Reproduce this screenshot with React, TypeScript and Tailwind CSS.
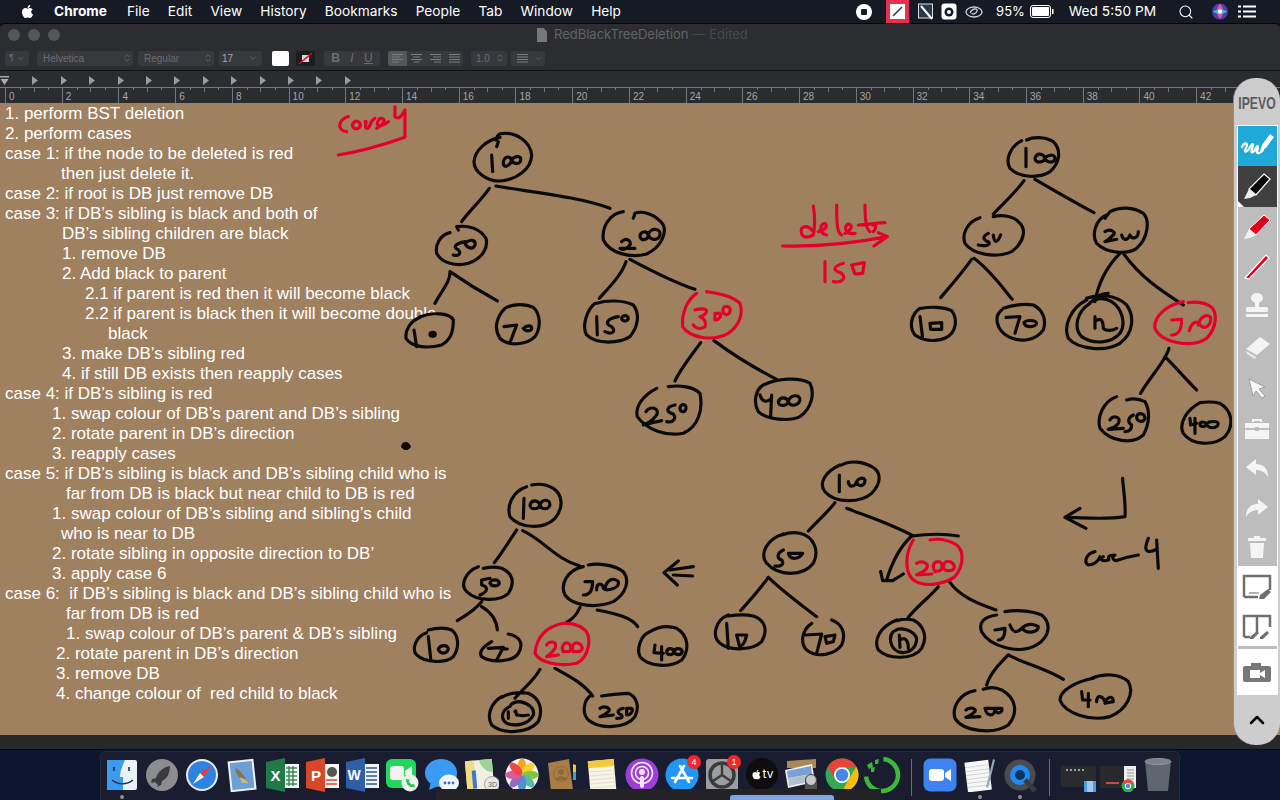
import React from "react";
import { FaApple } from "react-icons/fa";
import { ChevronDown, ChevronsUpDown, ChevronUp, Search } from "lucide-react";

const MENU = ["File", "Edit", "View", "History", "Bookmarks", "People", "Tab", "Window", "Help"];

const LINES: [string, string][] = [
  ["1. perform BST deletion", "pl-0"],
  ["2. perform cases", "pl-0"],
  ["case 1: if the node to be deleted is red", "pl-0"],
  ["then just delete it.", "pl-[56px]"],
  ["case 2: if root is DB just remove DB", "pl-0"],
  ["case 3: if DB’s sibling is black and both of", "pl-0"],
  ["DB’s sibling children are black", "pl-[57px]"],
  ["1. remove DB", "pl-[57px]"],
  ["2. Add black to parent", "pl-[57px]"],
  ["2.1 if parent is red then it will become black", "pl-[80px]"],
  ["2.2 if parent is black then it will become double", "pl-[80px]"],
  ["black", "pl-[103px]"],
  ["3. make DB’s sibling red", "pl-[57px]"],
  ["4. if still DB exists then reapply cases", "pl-[57px]"],
  ["case 4: if DB’s sibling is red", "pl-0"],
  ["1. swap colour of DB’s parent and DB’s sibling", "pl-[47px]"],
  ["2. rotate parent in DB’s direction", "pl-[47px]"],
  ["3. reapply cases", "pl-[47px]"],
  ["case 5: if DB’s sibling is black and DB’s sibling child who is", "pl-0"],
  ["far from DB is black but near child to DB is red", "pl-[61px]"],
  ["1. swap colour of DB’s sibling and sibling’s child", "pl-[47px]"],
  ["who is near to DB", "pl-[56px]"],
  ["2. rotate sibling in opposite direction to DB’", "pl-[47px]"],
  ["3. apply case 6", "pl-[47px]"],
  ["case 6:  if DB’s sibling is black and DB’s sibling child who is", "pl-0"],
  ["far from DB is red", "pl-[61px]"],
  ["1. swap colour of DB’s parent & DB’s sibling", "pl-[61px]"],
  ["2. rotate parent in DB’s direction", "pl-[51px]"],
  ["3. remove DB", "pl-[51px]"],
  ["4. change colour of  red child to black", "pl-[51px]"],
];

const K = "#0a0a0a";
const R = "#e4002b";

function Ink({ x, y, black, red, fill }: { x: number; y: number; black: string[]; red?: string[]; fill?: string[] }) {
  return (
    <g transform={`translate(${x} ${y}) scale(0.3333)`} fill="none" strokeWidth="9.5" strokeLinecap="round" strokeLinejoin="round">
      <path d={black.join(" ")} stroke={K} />
      {red && <path d={red.join(" ")} stroke={R} />}
      {fill && <path d={fill.join(" ")} stroke={K} fill={K} />}
    </g>
  );
}

function Drawing() {
  return (
    <svg className="absolute inset-0" width="1232" height="632" viewBox="0 103 1232 632">
      <rect x="418" y="316" width="22" height="9" fill="#9f805f" />
      <Ink
        x={400}
        y={100}
        black={[
          "M300 112 C260 120 225 150 222 185 C222 215 260 245 300 243 C350 240 395 205 395 165 C392 125 350 98 310 100 C300 100 290 105 288 120 M295 125 L290 140",
          "M275 165 L278 215 M310 190 C310 170 330 165 335 180 C340 195 365 195 362 175 C358 165 340 170 335 180 C330 200 310 205 310 190",
          "M268 265 C240 305 210 330 185 365 M288 258 C380 275 540 290 630 325",
          "M150 398 C120 405 105 435 110 460 C125 490 170 500 205 490 C250 475 265 440 258 415 C240 385 205 375 170 380 L175 390",
          "M195 425 C170 430 155 440 175 450 C185 460 175 470 160 465 M195 430 C210 415 228 420 225 435 C220 450 200 445 195 430",
          "M150 515 C150 550 125 570 105 610 M150 515 C200 550 250 580 292 603",
          "M60 652 C30 665 15 690 18 715 C35 745 90 745 125 735 C150 720 160 700 160 660 C150 640 100 635 60 650 M42 690 L50 740",
          "M315 625 C290 650 280 685 300 715 C325 740 380 735 405 710 C425 680 420 640 400 622 C375 610 340 612 320 622",
          "M312 680 L350 675 L330 728 M370 685 C380 675 395 675 395 685 C395 695 375 695 370 685",
          "M585 610 C560 630 545 680 560 705 C590 735 660 730 690 710 C715 680 720 640 700 615 C670 600 620 600 590 610",
          "M590 650 L592 705 M655 650 C625 655 610 670 635 680 C650 695 635 705 615 695 M665 655 a10 8 0 1 0 20 0 a10 8 0 1 0 -20 0",
          "M670 335 C630 340 605 380 610 420 C630 460 690 475 740 462 C785 440 800 400 790 375 C770 345 730 330 705 340 L700 355",
          "M665 425 C680 410 695 425 690 435 C680 450 665 450 660 445 C680 445 695 445 705 445 M720 410 c0 -15 20 -20 25 -5 c0 15 -20 20 -25 5 M745 405 C750 380 785 385 780 405 C775 425 750 420 745 405",
          "M678 485 C665 525 625 565 598 595 M690 478 C750 510 830 550 885 568",
          "M902 728 C880 760 845 800 825 843 M942 722 C1000 765 1075 810 1130 838",
          "M770 865 C730 885 705 920 712 950 C740 990 800 1010 850 1000 C895 980 910 930 900 880 C880 860 840 855 805 860",
          "M738 935 C750 915 780 925 770 945 C760 960 745 970 730 975 C750 970 770 965 785 962 M825 915 C800 920 795 935 820 942 C830 955 820 970 800 965 M840 925 c0 -15 20 -15 18 0 c-2 15 -18 12 -18 0",
          "M1090 855 C1065 870 1060 910 1075 935 C1100 960 1170 965 1200 950 C1235 925 1245 880 1230 850 C1200 830 1130 835 1090 855",
          "M1080 885 C1085 905 1100 910 1115 895 M1115 885 L1112 950 M1135 905 c5 -15 25 -15 30 0 c5 -20 35 -25 35 -5 c-5 20 -30 20 -35 5 c-5 15 -30 15 -30 0",
        ]}
        red={[
          "M890 580 C860 600 845 640 848 680 C870 715 940 725 985 700 C1020 675 1030 640 1020 610 C990 585 950 580 920 575",
          "M885 630 C900 625 920 625 920 635 C915 645 905 650 900 650 C915 655 920 670 915 680 C900 690 885 685 880 675 M945 640 L945 660 C960 660 965 645 960 640 Z M970 625 C975 615 995 620 990 635 C985 650 965 645 970 625",
        ]}
        fill={["M90 703 a8 6 0 1 0 16 0 a8 6 0 1 0 -16 0", "M8 1040 c3 -12 14 -12 20 0 l-6 5 l-8 0 z"]}
      />
      <Ink
        x={770}
        y={120}
        black={[
          "M755 62 C720 80 705 120 720 145 C750 175 810 175 840 155 C870 130 875 90 850 65 C825 50 790 50 770 60 M768 85 L768 140",
          "M795 115 c5 -18 25 -15 30 0 c5 -10 30 -15 30 0 c0 15 -25 15 -30 0 c-5 15 -30 15 -30 0",
          "M762 182 C735 220 700 250 670 282 M795 178 C850 210 920 250 972 278",
          "M630 293 C590 305 575 345 585 370 C610 405 680 415 725 395 C765 365 770 325 745 305 C725 285 690 285 670 290",
          "M655 340 C635 350 640 360 655 365 C665 375 645 380 625 375 M670 345 C672 365 680 375 692 345",
          "M605 418 C575 460 540 500 512 533 M612 415 C660 450 695 500 727 538",
          "M450 565 C425 580 415 620 435 645 C470 670 525 665 545 640 C560 620 560 590 545 572 C520 560 480 560 455 565 M450 590 L458 655 M480 610 L515 608 L515 628 L482 628 Z",
          "M695 570 C670 590 680 630 715 650 C755 670 800 660 820 630 C830 600 820 570 790 555 C760 550 730 555 700 565",
          "M708 592 L750 590 L735 640 M762 608 c5 -8 35 -10 38 2 c0 12 -35 15 -38 -2",
          "M950 540 C900 565 880 620 895 655 C925 690 1010 695 1050 670 C1090 640 1095 590 1070 555 C1040 525 985 520 950 535",
          "M960 550 C920 575 910 625 935 650 C970 675 1025 670 1050 640 C1070 610 1055 565 1025 545 C1000 530 975 535 960 548",
          "M975 590 L975 625 M975 605 C990 590 1000 600 1000 625 C1010 635 1030 632 1040 625",
          "M1050 400 C1010 440 985 490 975 545 M970 540 C985 525 1000 520 1015 520 M1060 400 C1110 470 1170 510 1240 555",
          "M1010 285 C975 300 965 345 980 370 C1010 400 1070 405 1100 385 C1135 355 1140 300 1120 280 C1090 260 1050 260 1020 275 L1005 295",
          "M1005 335 C1020 325 1040 335 1030 345 C1015 360 1005 365 1005 365 L1040 358 M1055 345 C1060 365 1075 360 1080 345 C1085 360 1105 355 1105 335",
          "M1197 685 C1190 720 1140 770 1112 820 M1185 710 C1220 745 1250 780 1280 810",
          "M1040 830 C1000 845 980 890 990 925 C1020 965 1090 975 1120 945 C1140 910 1140 870 1125 845 C1105 835 1085 835 1070 840",
          "M1020 900 C1030 885 1055 890 1045 910 C1035 925 1020 925 1015 928 L1060 925 M1090 885 C1070 895 1075 910 1085 915 C1085 930 1075 935 1065 935 M1100 890 c5 -15 25 -10 25 5 c-5 15 -25 10 -25 -5",
          "M1290 848 C1250 870 1225 910 1240 940 C1265 975 1330 980 1365 950 C1395 915 1385 870 1350 850 C1330 845 1310 845 1290 848",
          "M1260 895 L1262 915 L1280 910 M1275 895 L1275 940 M1290 912 c0 -8 15 -8 20 0 c5 -10 35 -10 35 0 c-5 15 -30 15 -35 0 c-5 10 -20 10 -20 0",
        ]}
        red={[
          "M1240 545 C1190 555 1150 590 1155 625 C1175 670 1270 685 1310 655 C1340 625 1345 575 1320 558 C1300 545 1270 545 1255 548",
          "M1205 600 L1235 598 C1235 625 1230 645 1205 645 M1258 632 C1265 605 1285 600 1290 615 C1300 630 1325 620 1322 592 C1310 580 1290 590 1285 615",
          "M130 258 C135 290 135 320 130 345 C100 360 90 345 95 325 C105 315 120 320 130 335",
          "M145 335 C165 330 175 320 165 310 C150 310 145 340 170 345 M200 255 C200 300 200 340 215 345",
          "M225 340 C245 330 250 315 235 312 C220 320 225 345 255 340 M285 255 C285 300 290 330 300 335 M265 315 C290 315 320 308 345 308 M310 335 C320 325 320 310 310 315",
          "M38 378 C130 380 250 370 352 350 M325 338 L352 350 L312 378",
          "M165 425 L165 485 M220 430 C190 440 185 450 215 460 C230 475 215 490 190 485 M245 435 L283 428 L278 460 L255 462 Z",
        ]}
      />
      <Ink
        x={400}
        y={460}
        black={[
          "M380 80 C335 95 320 140 330 170 C360 205 430 210 465 175 C490 145 490 105 460 85 C435 70 410 72 395 75 M372 115 L370 175",
          "M390 135 c5 -18 25 -15 30 0 c5 -18 30 -20 30 0 c-5 15 -25 15 -30 0 c-5 15 -30 15 -30 0",
          "M350 210 C330 240 305 280 283 308 M368 212 C430 240 470 300 540 318",
          "M235 320 C195 335 180 375 200 395 C230 425 300 425 325 400 C345 370 340 340 305 325 C280 318 265 322 250 325",
          "M270 355 L245 360 L245 375 C265 380 265 395 240 405 M270 370 c0 -12 28 -15 28 0 c-3 10 -25 10 -28 0",
          "M245 425 C225 450 200 465 172 482 M245 440 C270 455 290 480 292 510",
          "M80 518 C45 530 35 570 50 585 C75 610 140 610 160 590 C180 560 175 525 155 510 C130 500 105 505 85 510 M85 530 L92 595",
          "M115 568 c5 -15 30 -15 30 0 c-5 15 -25 15 -30 0",
          "M275 545 C250 560 235 575 245 590 C275 610 340 605 355 580 C370 555 365 530 325 522 M265 565 L310 562 L290 600 M300 565 L322 567",
          "M540 442 C530 465 520 475 500 487 M592 450 C640 460 695 470 713 500",
          "M550 320 C500 330 480 375 495 405 C520 440 590 445 640 425 C680 400 690 360 670 335 C640 312 590 310 565 315",
          "M555 365 L578 365 C578 390 570 405 550 405 M590 390 C590 365 610 370 610 385 C620 395 660 385 655 365 C640 350 620 360 615 385",
          "M750 515 C720 525 710 570 720 590 C745 620 810 625 845 600 C870 570 865 525 830 505 C800 495 775 500 750 515",
          "M765 555 L762 578 L790 580 M785 560 L785 600 M800 575 c3 -12 18 -12 22 0 c3 -12 22 -12 25 0 c-3 12 -20 12 -25 0 c-4 12 -20 12 -22 0",
          "M420 628 C400 665 370 685 345 715 M465 625 C510 650 550 670 578 708",
          "M305 710 C270 730 260 770 275 795 C310 825 385 820 415 785 C430 750 420 715 385 700 C355 695 325 700 305 712",
          "M330 740 C305 750 300 775 320 790 C345 800 385 795 400 765 C405 745 385 730 360 725 C345 725 335 730 330 738",
          "M325 755 L325 775 M345 755 C350 745 345 770 355 765 C370 770 380 765 385 765",
          "M575 705 C550 720 545 760 565 780 C600 810 680 805 705 770 C720 740 710 710 685 700 C660 700 625 705 605 708",
          "M600 745 C615 735 635 745 625 755 C615 765 605 768 600 770 L640 765 M670 745 C650 750 650 760 665 765 C670 775 660 775 650 775 M680 745 L680 765 C695 765 700 750 695 745 Z",
          "M880 320 L810 330 M878 348 L820 345 M835 303 L792 338 L832 375",
        ]}
        red={[
          "M490 490 C440 500 410 530 405 580 C420 610 480 620 530 610 C570 590 575 530 555 510 C530 490 510 490 490 490",
          "M440 555 C450 540 475 545 465 565 C455 580 445 585 440 590 L475 585 M490 575 c-8 -15 2 -30 15 -25 c10 5 10 25 0 25 c-8 0 -15 0 -15 0 M520 575 c-8 -15 2 -30 15 -25 c15 5 15 25 0 25 c-8 0 -15 0 -15 0",
        ]}
      />
      <Ink
        x={700}
        y={460}
        black={[
          "M420 15 C375 35 355 70 375 95 C405 130 480 130 515 100 C545 70 545 35 515 20 C490 5 450 0 425 15 M418 45 L418 95",
          "M445 65 c3 20 20 15 25 0 c3 18 25 15 25 -5 c-5 -10 -20 -5 -25 5",
          "M405 128 C385 155 350 185 325 213 M440 145 C490 165 570 190 640 228",
          "M250 222 C195 240 180 285 200 310 C235 350 310 350 340 310 C360 270 340 230 300 220 C280 215 265 218 245 225",
          "M250 270 C230 280 230 295 245 300 C255 315 240 320 225 318 M265 280 C270 300 295 300 308 280 Z",
          "M205 352 C175 395 150 420 122 452 M205 352 C250 395 310 440 350 470",
          "M85 465 C45 480 35 530 60 550 C90 575 160 570 185 545 C205 510 195 480 160 468 C135 462 105 465 85 468 M80 490 L85 565 M110 525 L140 525 C135 550 125 560 118 558 Z",
          "M335 490 C305 510 300 550 320 570 C350 595 405 585 425 555 C440 520 425 490 395 480 M318 525 L365 522 L350 580 M375 530 L405 525 L400 545 L380 550 Z",
          "M590 480 C540 500 520 540 535 570 C565 600 640 600 665 565 C685 530 670 495 640 480 C620 475 605 478 590 482",
          "M580 515 C565 530 570 565 595 575 C625 585 650 565 650 535 C640 510 600 500 585 512 M598 525 L600 562 M600 540 C615 530 625 540 625 565",
          "M715 380 C690 410 650 440 625 472 M748 365 C780 410 830 430 888 450",
          "M775 228 C730 220 680 222 635 228 C600 260 575 310 560 360 M542 335 L548 362 L578 362 L610 342",
          "M890 465 C850 470 835 490 845 515 C870 560 960 585 1010 555 C1050 530 1055 490 1025 465 C990 450 940 450 915 455",
          "M885 510 L915 505 C915 525 910 540 895 540 M930 495 C940 520 950 520 965 505 C985 525 1015 515 1015 500 C1000 490 980 490 965 505",
          "M925 585 C900 610 870 640 860 675 M925 585 C970 610 1040 625 1090 658",
          "M825 692 C780 700 755 740 765 775 C790 815 880 825 925 795 C955 760 950 715 905 690 C885 680 865 682 850 688",
          "M798 750 C810 740 830 745 825 755 C815 765 805 770 798 772 L840 770 M855 745 C860 770 880 770 885 752 C895 765 910 755 905 745 Z",
          "M1180 655 C1130 665 1080 690 1080 720 C1095 760 1170 785 1230 770 C1280 750 1305 700 1285 665 C1260 640 1210 640 1175 655",
          "M1145 695 L1148 720 L1170 720 M1165 700 L1165 740 M1190 725 C1190 700 1210 710 1215 725 C1225 710 1240 705 1240 725 L1215 730",
          "M1268 55 C1270 90 1278 130 1275 170 C1210 180 1150 172 1095 172 M1140 145 L1095 172 L1158 205",
          "M1185 275 C1160 280 1150 305 1165 315 C1180 315 1195 305 1200 290 M1210 290 C1195 300 1210 305 1225 300 C1230 300 1215 285 1245 285 C1230 295 1245 305 1255 300 C1270 295 1285 290 1315 285",
          "M1345 235 C1335 260 1330 285 1365 270 M1370 240 L1375 325",
        ]}
        red={[
          "M640 240 C615 280 615 330 635 355 C665 385 730 375 765 350 C795 310 790 270 770 255 C745 240 715 235 690 240",
          "M650 310 C665 300 690 310 680 325 C670 340 655 340 650 345 L695 342 M705 335 c-10 -15 -5 -30 10 -30 c15 0 15 28 0 28 c-5 0 -8 0 -10 2 M735 330 c-10 -15 0 -30 15 -25 c15 5 20 25 0 27 c-8 0 -12 0 -15 -2",
        ]}
      />
      <Ink
        x={0}
        y={100}
        black={[]}
        red={[
          "M1045 50 C1020 55 1005 90 1040 95 M1065 65 C1050 75 1060 90 1075 85 C1090 75 1075 60 1065 65 M1095 65 C1105 60 1090 80 1100 85 C1115 85 1105 65 1125 55 M1130 85 C1155 70 1160 55 1140 55 C1125 70 1130 90 1165 65",
          "M1185 20 L1185 50 C1195 60 1205 50 1215 30 L1215 110 M1015 165 C1080 155 1150 135 1215 112",
        ]}
      />
    </svg>
  );
}

function Box({ className, children }: { className: string; children?: React.ReactNode }) {
  return <div className={`h-[15px] rounded-[3px] bg-[#38393d] flex items-center ${className}`}>{children}</div>;
}

function Toolbar() {
  return (
    <div className="h-[24px] pl-[5px] flex items-center text-[10px] text-[#6d6e71]">
      <Box className="w-[24px] justify-between px-[4px]">
        <span className="text-[9px]">¶</span>
        <ChevronDown size={9} />
      </Box>
      <Box className="w-[96px] ml-[8px] justify-between pl-[6px] pr-[1px]">
        <span>Helvetica</span>
        <ChevronsUpDown size={10} />
      </Box>
      <Box className="w-[76px] ml-[5px] justify-between pl-[6px] pr-[1px]">
        <span>Regular</span>
        <ChevronsUpDown size={10} />
      </Box>
      <Box className="w-[43px] ml-[5px] justify-between pl-[3px] pr-[4px]">
        <span className="text-[#a5a6a8]">17</span>
        <ChevronDown size={10} />
      </Box>
      <div className="w-[17px] h-[15px] ml-[10px] rounded-[2px] bg-white" />
      <div className="w-[19px] h-[15px] ml-[7px] rounded-[2px] bg-[#1d1d1f] overflow-hidden">
        <svg width="19" height="15" viewBox="0 0 19 15">
          <rect x="6" y="4" width="7" height="7" fill="#d8d8d8" />
          <path d="M3 13 L16 2" stroke="#e4002b" strokeWidth="1.5" />
        </svg>
      </div>
      <Box className="w-[56px] ml-[9px] justify-around px-[2px] text-[12px]">
        <span className="font-bold">B</span>
        <span className="italic">I</span>
        <span className="underline">U</span>
      </Box>
      <Box className="w-[75px] ml-[8px] overflow-hidden">
        <div className="w-[19px] h-full bg-[#55565a] flex items-center justify-center">
          <Lines3 kind="l" />
        </div>
        <div className="w-[19px] flex justify-center">
          <Lines3 kind="c" />
        </div>
        <div className="w-[19px] flex justify-center">
          <Lines3 kind="r" />
        </div>
        <div className="w-[18px] flex justify-center">
          <Lines3 kind="j" />
        </div>
      </Box>
      <Box className="w-[36px] ml-[8px] justify-between pl-[5px] pr-[2px]">
        <span>1.0</span>
        <ChevronsUpDown size={10} />
      </Box>
      <Box className="w-[34px] ml-[4px] justify-between pl-[5px] pr-[2px]">
        <Lines3 kind="j" />
        <ChevronDown size={9} />
      </Box>
    </div>
  );
}

function Lines3({ kind }: { kind: string }) {
  const d =
    kind === "l"
      ? "M1 1.5H12M1 4H9M1 6.5H12M1 9H8"
      : kind === "c"
      ? "M1 1.5H12M3 4H10M1 6.5H12M3.5 9H9.5"
      : kind === "r"
      ? "M1 1.5H12M4 4H12M1 6.5H12M5 9H12"
      : "M1 1.5H12M1 4H12M1 6.5H12M1 9H12";
  return (
    <svg width="13" height="11" viewBox="0 0 13 11">
      <path d={d} stroke="#7c7d80" strokeWidth="1" fill="none" />
    </svg>
  );
}

function Ruler() {
  const labels = Array.from({ length: 22 }, (_, i) => i * 2);
  const tabs = Array.from({ length: 12 }, (_, i) => i);
  return (
    <div className="h-[33px] pt-[1px] bg-[#2b2c30] relative overflow-hidden border-t border-[#111214]">
      <div className="h-[15px] flex items-center">
        <svg width="10" height="12" viewBox="0 0 10 12" className="mt-[2px]">
          <path d="M0 1H9V2.5H0Z M0.5 4H8.5L4.5 10Z" fill="#a9aaac" />
        </svg>
        {tabs.map((i) => (
          <div key={i} className="w-[28.4px] flex justify-end first:w-[27.5px] mt-[2px]">
            <svg width="6" height="9" viewBox="0 0 6 9">
              <path d="M0 0L6 4.5L0 9Z" fill="#9b9c9e" />
            </svg>
          </div>
        ))}
      </div>
      <div className="flex pl-[5px] h-[16px] border-t border-[#77787a] w-full">
        {labels.map((n) => (
          <div key={n} className="w-[56.72px] shrink-0 border-l border-[#77787a] pl-[3px] pt-[2px] text-[10px] leading-[13px] text-[#a4a5a7] relative">
            {n}
            <span className="absolute left-[14px] top-0 w-px h-[2px] bg-[#77787a]" />
            <span className="absolute left-[27.5px] top-0 w-px h-[4px] bg-[#77787a]" />
            <span className="absolute left-[42px] top-0 w-px h-[2px] bg-[#77787a]" />
          </div>
        ))}
      </div>
    </div>
  );
}

function Slot({ children, dot }: { children: React.ReactNode; dot?: boolean }) {
  return (
    <div className="w-10 h-full relative flex justify-center pt-[6px]">
      {children}
      {dot && <span className="absolute left-[18px] top-[43px] w-[4px] h-[4px] rounded-full bg-[#8d8f96]" />}
    </div>
  );
}

function I({ children, w = 34 }: { children: React.ReactNode; w?: number }) {
  return (
    <svg width={w} height="34" viewBox={`0 0 ${w} 34`}>
      {children}
    </svg>
  );
}

function Badge({ n }: { n: string }) {
  return (
    <span className="absolute right-[1px] top-[3px] w-[14px] h-[14px] rounded-full bg-[#f0272d] text-white text-[9px] leading-[14px] text-center">
      {n}
    </span>
  );
}

function Dock() {
  return (
    <div className="h-[50px] bg-[#0d1630] relative overflow-hidden">
      <div className="absolute left-[100px] top-[1px] w-[1080px] h-[60px] rounded-[5px] bg-[#191d2f] border border-[#262a38] flex pl-[1px]">
        <Slot dot>
          <I>
            <rect x="2" y="2" width="30" height="30" rx="2" fill="#e9f0f6" />
            <path d="M2 4a2 2 0 0 1 2-2H20C16 10 15 16 15 19H18V32H4a2 2 0 0 1-2-2Z" fill="#3a9bef" />
            <path d="M9 9V13M24 9V13" stroke="#16324f" strokeWidth="1.6" />
            <path d="M7 22C13 27 22 27 28 22" stroke="#16324f" strokeWidth="1.4" fill="none" />
          </I>
        </Slot>
        <Slot>
          <I>
            <circle cx="17" cy="17" r="16" fill="#8c8d90" />
            <path d="M25 8C18 9 13 14 11 20L7 21L6 25L10 24L13 27L12 29L16 27L17 23C22 21 25 15 25 8Z" fill="#3b3b3d" />
          </I>
        </Slot>
        <Slot>
          <I>
            <circle cx="17" cy="17" r="16" fill="#e8eaee" />
            <circle cx="17" cy="17" r="14" fill="#2f83e0" />
            <path d="M26 8L15 15L19 19Z" fill="#ef3b36" />
            <path d="M8 26L15 15L19 19Z" fill="#f4f4f4" />
          </I>
        </Slot>
        <Slot>
          <I>
            <g transform="rotate(-6 17 17)">
              <rect x="4" y="2" width="26" height="31" fill="#f1f1f1" />
              <rect x="6" y="4" width="22" height="27" fill="#6a9fd8" />
              <path d="M11 9C16 12 19 18 23 26L18 24C14 21 11 15 11 9Z" fill="#8a6f47" />
              <path d="M14 19C18 20 21 22 23 26L16 25Z" fill="#c9b590" />
            </g>
          </I>
        </Slot>
        <Slot>
          <I>
            <rect x="14" y="6" width="20" height="24" fill="#f4f4f4" />
            <path d="M21 10H32M21 14H32M21 18H32M21 22H32M21 26H32M24 8V28M28 8V28" stroke="#3c8a5c" strokeWidth="1.5" />
            <path d="M1 4L20 0V34L1 30Z" fill="#1f7a47" />
            <text x="5.5" y="23" fill="#fff" fontSize="15" fontWeight="700" fontFamily="Liberation Sans">X</text>
          </I>
        </Slot>
        <Slot>
          <I>
            <rect x="14" y="6" width="20" height="24" fill="#f4f4f4" />
            <circle cx="27" cy="14" r="5" fill="#555" />
            <path d="M21 22H32M21 26H32" stroke="#d9472b" strokeWidth="1.5" />
            <path d="M1 4L20 0V34L1 30Z" fill="#d9472b" />
            <text x="6" y="23" fill="#fff" fontSize="15" fontWeight="700" fontFamily="Liberation Sans">P</text>
          </I>
        </Slot>
        <Slot>
          <I>
            <rect x="14" y="6" width="20" height="24" fill="#f4f4f4" />
            <path d="M21 10H32M21 14H32M21 18H32M21 22H32M21 26H32" stroke="#2b5797" strokeWidth="1.5" />
            <path d="M1 4L20 0V34L1 30Z" fill="#2e5ea6" />
            <text x="2.5" y="22" fill="#fff" fontSize="14" fontWeight="700" fontFamily="Liberation Sans">W</text>
          </I>
        </Slot>
        <Slot>
          <I>
            <rect x="1" y="1" width="30" height="29" rx="6" fill="#22d85a" />
            <rect x="5" y="8" width="14" height="14" rx="3" fill="#f2f2f2" />
            <path d="M20 13L27 8V22L20 17Z" fill="#f2f2f2" />
            <circle cx="25" cy="25" r="8.5" fill="#eef0ee" />
            <path d="M21 21C21 27 25 30 30 29L29 26L26.5 26.5L24 24L24.5 21.5Z" fill="#22c654" />
          </I>
        </Slot>
        <Slot>
          <I>
            <ellipse cx="16" cy="15" rx="16" ry="14" fill="#3a9bf5" />
            <path d="M6 24L4 32L13 28Z" fill="#3a9bf5" />
            <ellipse cx="24" cy="25" rx="10" ry="8.5" fill="#f2f4f8" />
            <circle cx="20" cy="25" r="1.4" fill="#3a70c8" />
            <circle cx="24" cy="25" r="1.4" fill="#3a70c8" />
            <circle cx="28" cy="25" r="1.4" fill="#3a70c8" />
          </I>
        </Slot>
        <Slot>
          <I>
            <g transform="rotate(-5 15 16)">
              <rect x="1" y="2" width="27" height="30" fill="#f1eee2" />
              <path d="M15 2H28V15C22 15 17 10 15 2Z" fill="#9dd39a" />
              <path d="M1 2H10V32H1Z" fill="#f5d76e" opacity="0.8" />
              <path d="M9 12L9 30" stroke="#3a79d0" strokeWidth="4" />
            </g>
            <circle cx="27" cy="26" r="7.5" fill="#e8e8e8" stroke="#a9a9a9" />
            <text x="23" y="29" fontSize="7" fill="#666" fontFamily="Liberation Sans">3D</text>
          </I>
        </Slot>
        <Slot>
          <I>
            <circle cx="17" cy="17" r="16.5" fill="#f2f2f2" />
            <g transform="translate(17 17)">
              <ellipse cx="0" cy="-8.5" rx="4.2" ry="8" fill="#f7a823" />
              <ellipse cx="0" cy="-8.5" rx="4.2" ry="8" fill="#f2d22c" transform="rotate(45)" />
              <ellipse cx="0" cy="-8.5" rx="4.2" ry="8" fill="#84c443" transform="rotate(90)" />
              <ellipse cx="0" cy="-8.5" rx="4.2" ry="8" fill="#5cb8a8" transform="rotate(135)" />
              <ellipse cx="0" cy="-8.5" rx="4.2" ry="8" fill="#4f8fd8" transform="rotate(180)" />
              <ellipse cx="0" cy="-8.5" rx="4.2" ry="8" fill="#8d6cc4" transform="rotate(225)" />
              <ellipse cx="0" cy="-8.5" rx="4.2" ry="8" fill="#d35da0" transform="rotate(270)" />
              <ellipse cx="0" cy="-8.5" rx="4.2" ry="8" fill="#ea4a45" transform="rotate(315)" />
            </g>
          </I>
        </Slot>
        <Slot>
          <I w={30}>
            <path d="M1 5L22 1L26 32L4 33Z" fill="#a87d47" />
            <path d="M26 6L29 7V14L26 14Z" fill="#f1c33c" />
            <path d="M26 14L29 14V22L26 22Z" fill="#3ba4b8" />
            <circle cx="14" cy="16" r="7.5" fill="none" stroke="#8e6a3c" />
            <circle cx="14" cy="14" r="3" fill="#8e6a3c" />
            <path d="M8 22C10 17 18 17 20 22Z" fill="#8e6a3c" />
          </I>
        </Slot>
        <Slot>
          <I w={30}>
            <g transform="rotate(-5 15 17)">
              <rect x="2" y="2" width="26" height="31" fill="#f8f5e6" />
              <rect x="2" y="2" width="26" height="7" fill="#f4c93c" />
              <path d="M2 13H28M2 17H28M2 21H28M2 25H28M2 29H28" stroke="#d8d5c5" strokeWidth="0.7" />
            </g>
          </I>
        </Slot>
        <Slot>
          <I>
            <circle cx="17" cy="17" r="16.5" fill="#9b3fd6" />
            <circle cx="17" cy="15" r="10.5" fill="none" stroke="#f3e6fb" strokeWidth="1.6" />
            <circle cx="17" cy="15" r="6.5" fill="none" stroke="#f3e6fb" strokeWidth="1.6" />
            <circle cx="17" cy="14" r="3" fill="#f3e6fb" />
            <rect x="15" y="18" width="4" height="12" rx="2" fill="#f3e6fb" />
          </I>
        </Slot>
        <Slot>
          <I>
            <circle cx="17" cy="17" r="16.5" fill="#2196f3" />
            <path d="M19 8L10 24M15 8L24 24M7 20H27" stroke="#fff" strokeWidth="2.6" strokeLinecap="round" />
          </I>
          <Badge n="4" />
        </Slot>
        <Slot>
          <I>
            <rect x="1" y="1" width="32" height="32" rx="3" fill="#9c9da0" />
            <circle cx="17" cy="17" r="12" fill="none" stroke="#3a3a3c" strokeWidth="3.5" />
            <path d="M17 17V7M17 17L8 23M17 17L26 23" stroke="#3a3a3c" strokeWidth="2.4" />
          </I>
          <Badge n="1" />
        </Slot>
        <Slot>
          <div className="w-[32px] h-[32px] rounded-full bg-[#0d0d0e] flex items-center justify-center text-white">
            <FaApple size={11} />
            <span className="text-[12px] leading-none font-['Inter',sans-serif] ml-[1px]">tv</span>
          </div>
        </Slot>
        <Slot>
          <I w={36}>
            <path d="M3 3L32 1V10L3 10Z" fill="#a88a56" />
            <path d="M1 12L28 6L31 24L4 30Z" fill="#f2f2f2" />
            <path d="M3 13L27 8L28 16L4 20Z" fill="#7ba0d8" />
            <path d="M4 20L28 16L29 23L5 28Z" fill="#b2c2cc" />
            <rect x="21" y="19" width="12" height="14" rx="3" fill="#57534c" />
            <circle cx="27" cy="22" r="5.5" fill="#c7c8c8" stroke="#444" />
          </I>
        </Slot>
        <Slot>
          <I>
            <circle cx="17" cy="17" r="16.5" fill="#34a853" />
            <path d="M17 0.5A16.5 16.5 0 0 1 31.3 8.8L17 9H3A16.5 16.5 0 0 1 17 0.5Z" fill="#ea4335" />
            <path d="M31.3 8.8A16.5 16.5 0 0 1 17 33.5L24 21Z" fill="#fbbc05" />
            <path d="M2.7 8.8L10 21L17 9Z" fill="#ea4335" />
            <circle cx="17" cy="17" r="8" fill="#fff" />
            <circle cx="17" cy="17" r="6.3" fill="#4a86e8" />
          </I>
        </Slot>
        <Slot>
          <svg width="38" height="40" viewBox="0 0 38 40" className="-mt-[2px]">
            <circle cx="19" cy="19" r="16" fill="none" stroke="#3cb83c" strokeWidth="4.5" strokeDasharray="72 28.5" transform="rotate(-85 19 19)" />
            <path d="M4 9L9 6L10 11L6 13ZM12 4L16 3L15 8L12 8ZM8 12L12 11L11 16L8 16Z" fill="#3cb83c" />
          </svg>
        </Slot>
        <div className="w-px h-[37px] mt-[7px] ml-[9px] mr-[8px] bg-[#6d6f78]" />
        <Slot>
          <I>
            <rect x="0.5" y="0.5" width="33" height="33" rx="7" fill="#3d82ee" />
            <rect x="6" y="11" width="15" height="12" rx="3" fill="#fff" />
            <path d="M22 15L28 11V23L22 19Z" fill="#fff" />
          </I>
        </Slot>
        <Slot dot>
          <I w={32}>
            <g transform="rotate(-7 15 17)">
              <rect x="2" y="3" width="24" height="30" fill="#f7f7f7" />
              <path d="M2 8H26M2 12H26M2 16H26M2 20H26M2 24H26M2 28H26" stroke="#c4c4c4" strokeWidth="0.7" />
            </g>
            <path d="M29 1L22 29L24 30L31 2Z" fill="#8fa9c4" />
          </I>
        </Slot>
        <Slot dot>
          <I>
            <circle cx="17" cy="17" r="15.5" fill="#4a4b50" />
            <circle cx="17" cy="17" r="10" fill="#1f8bf2" />
            <circle cx="17" cy="17" r="5" fill="#10345e" />
            <path d="M22 22L32 33" stroke="#3a3b40" strokeWidth="5" />
          </I>
        </Slot>
        <div className="w-px h-[37px] mt-[7px] ml-[9px] mr-[8px] bg-[#6d6f78]" />
        <Slot>
          <I w={36}>
            <rect x="1" y="8" width="35" height="21" fill="#2a2b2e" />
            <path d="M6 12H26" stroke="#9fa0a2" strokeWidth="2" strokeDasharray="2 2" />
            <rect x="24" y="23" width="12" height="11" fill="#4a9bea" />
            <path d="M30 23V34" stroke="#e8eff5" strokeWidth="6" opacity="0.55" />
          </I>
        </Slot>
        <Slot>
          <I w={36}>
            <rect x="0" y="8" width="24" height="22" fill="#28292c" />
            <rect x="24" y="8" width="12" height="22" fill="#eeeeee" />
            <path d="M27 12H34M27 15H34M27 18H34M27 21H34" stroke="#999" />
            <rect x="6" y="24" width="13" height="2" fill="#c94a4a" />
            <circle cx="28" cy="28" r="6.5" fill="#34a853" />
            <path d="M28 21.5A6.5 6.5 0 0 1 33.6 25L28 25H22.4A6.5 6.5 0 0 1 28 21.5Z" fill="#ea4335" />
            <circle cx="28" cy="28" r="2.8" fill="#4a86e8" stroke="#fff" />
          </I>
        </Slot>
        <Slot>
          <I w={28}>
            <path d="M1 3H27L24 33H4Z" fill="#5e6670" />
            <ellipse cx="14" cy="3.5" rx="13" ry="3" fill="#7a828c" stroke="#8f969f" />
          </I>
        </Slot>
      </div>
      <div className="absolute left-[436px] top-[39px] w-[445px] h-[11px] bg-[#232327]">
        <div className="ml-[294px] mt-[6px] w-[104px] h-[5px] rounded-t-[3px] bg-[#7ea6e6]" />
      </div>
    </div>
  );
}

function Tool({ children, className }: { children: React.ReactNode; className: string }) {
  return <div className={`flex items-center justify-center w-full ${className}`}>{children}</div>;
}

function Ipevo() {
  const w = "#f4f4f4";
  return (
    <div className="absolute left-[1233px] top-[78px] w-[47px] h-[667px] rounded-[22px] bg-[#cdcdcd] border-l border-[#8f8f8f] flex flex-col items-center">
      <div className="h-[47px] pt-[16px] text-[17px] leading-[20px] font-bold text-[#5c5c5c] font-['Liberation_Sans',sans-serif] scale-x-[0.72]">IPEVO</div>
      <div className="w-[41px] bg-white flex flex-col p-[1px]">
        <Tool className="h-[40px] bg-[#1ea9d8]">
          <svg width="36" height="32" viewBox="0 0 36 32">
            <path d="M3 17C5 12 10 12 7 18C4 23 8 23 11 17C14 12 15 14 13 19C11 24 15 23 17 18C19 14 20 17 18 21C17 24 21 24 24 20" stroke="#fff" strokeWidth="2.2" fill="none" strokeLinecap="round" />
            <path d="M23 15L31 4L35 7L27 18L21 21Z" fill="#fff" />
          </svg>
        </Tool>
        <Tool className="h-[41px] bg-[#404040] relative">
          <svg width="30" height="32" viewBox="0 0 30 32">
            <path d="M22 3L28 8L14 24L7 18Z" fill="#050505" stroke="#fff" strokeWidth="1.2" />
            <path d="M7 18L14 24L8 27L2 28Z" fill="#eee" />
          </svg>
          <span className="absolute left-0 bottom-0 w-0 h-0 border-l-[6px] border-l-white border-t-[6px] border-t-transparent" />
        </Tool>
        <div className="bg-[#bdbdbd] flex flex-col">
          <Tool className="h-[40px]">
            <svg width="30" height="30" viewBox="0 0 30 30">
              <path d="M22 3L28 8L14 23L7 17Z" fill="#e3001b" stroke="#fff" strokeWidth="1" />
              <path d="M7 17L14 23L8 26L2 27Z" fill="#f1f1f1" />
            </svg>
          </Tool>
          <Tool className="h-[39px]">
            <svg width="30" height="30" viewBox="0 0 30 30">
              <path d="M24 3L27 6L7 27L3 26Z" fill="#e3001b" stroke="#fff" strokeWidth="1.2" />
            </svg>
          </Tool>
          <Tool className="h-[40px]">
            <svg width="28" height="28" viewBox="0 0 28 28" fill={w}>
              <ellipse cx="14" cy="6" rx="6" ry="5" />
              <rect x="12" y="10" width="4" height="6" />
              <rect x="3" y="15" width="22" height="5" rx="1.5" />
              <rect x="3" y="22" width="22" height="3" />
            </svg>
          </Tool>
          <Tool className="h-[41px]">
            <svg width="28" height="28" viewBox="0 0 28 28" fill={w}>
              <path d="M17 4L27 11L14 22L3 16Z" />
              <path d="M3 18L13 24L12 26L4 21Z" opacity="0.85" />
            </svg>
          </Tool>
          <Tool className="h-[41px]">
            <svg width="26" height="26" viewBox="0 0 26 26">
              <path d="M5 4L21 12L15 14L21 21L18 23L12 16L9 21Z" fill={w} stroke="#8f8f8f" strokeWidth="0.8" />
            </svg>
          </Tool>
          <Tool className="h-[40px]">
            <svg width="28" height="26" viewBox="0 0 28 26" fill={w}>
              <path d="M9 4H19V7H17V6H11V7H9Z" />
              <path d="M2 8H26V13H16V12H12V13H2Z" />
              <path d="M2 15H12V16H16V15H26V24H2Z" />
            </svg>
          </Tool>
          <Tool className="h-[40px]">
            <svg width="28" height="24" viewBox="0 0 28 24" fill={w}>
              <path d="M3 11L13 3V8C21 8 25 13 25 21C22 16 18 14 13 14V19Z" />
            </svg>
          </Tool>
          <Tool className="h-[40px]">
            <svg width="28" height="24" viewBox="0 0 28 24" fill={w}>
              <path d="M25 11L15 3V8C7 8 3 13 3 21C6 16 10 14 15 14V19Z" />
            </svg>
          </Tool>
          <Tool className="h-[38px]">
            <svg width="24" height="26" viewBox="0 0 24 26" fill={w}>
              <path d="M9 2H15V4H21V7H3V4H9Z" />
              <path d="M5 9H19L18 24H6Z" />
            </svg>
          </Tool>
        </div>
        <Tool className="h-[42px]">
          <svg width="30" height="28" viewBox="0 0 30 28" fill="none">
            <path d="M2 24V3H28V17" stroke="#6f6f6f" strokeWidth="2.5" />
            <path d="M2 24H16" stroke="#6f6f6f" strokeWidth="2.5" />
            <path d="M7 20H17" stroke="#999" strokeWidth="1.5" />
            <path d="M18 22L26 16L29 19L22 26L17 26Z" fill="#6f6f6f" />
          </svg>
        </Tool>
        <Tool className="h-[41px] border-b-[3px] border-b-[#bdbdbd]">
          <svg width="30" height="28" viewBox="0 0 30 28" fill="none">
            <path d="M2 24V3H28V14M15 3V19M2 24H8" stroke="#6f6f6f" strokeWidth="2.5" />
            <path d="M8 24L15 18L17 20L11 26L8 26Z M18 24L25 18L27 20L21 26L18 26Z" fill="#6f6f6f" />
          </svg>
        </Tool>
        <Tool className="h-[45px]">
          <svg width="30" height="24" viewBox="0 0 30 24" fill="#777">
            <path d="M9 3H19V6H27A2 2 0 0 1 29 8V20A2 2 0 0 1 27 22H3A2 2 0 0 1 1 20V8A2 2 0 0 1 3 6H9Z" />
            <rect x="8" y="10" width="10" height="8" fill="#fff" />
            <path d="M18 13L23 10V18L18 15Z" fill="#fff" />
          </svg>
        </Tool>
      </div>
      <div className="flex-1 flex items-center justify-center text-black">
        <ChevronUp size={24} strokeWidth={2.5} />
      </div>
    </div>
  );
}

function MenuBar() {
  return (
    <div className="h-[23px] bg-[#161a25] flex items-center text-[13.7px] text-white font-['Inter',sans-serif] relative">
      <div className="w-[54px] pl-[20px] shrink-0">
        <FaApple size={15} />
      </div>
      <span className="font-bold mr-[20px]">Chrome</span>
      <div className="flex gap-[18.2px]">
        {MENU.map((m) => (
          <span key={m}>{m}</span>
        ))}
      </div>
      <div className="ml-auto flex items-center h-full text-[13px]">
        <svg width="16" height="16" viewBox="0 0 16 16">
          <circle cx="8" cy="8" r="8" fill="#fff" />
          <rect x="5" y="5" width="6" height="6" rx="1" fill="#161a25" />
        </svg>
        <div className="w-[23px] h-[23px] ml-[14px] bg-[#ea2e4e] flex items-center justify-center">
          <svg width="15" height="15" viewBox="0 0 15 15">
            <rect width="15" height="15" fill="#fff" />
            <path d="M3 12L12 3" stroke="#3a3a50" strokeWidth="1.6" />
          </svg>
        </div>
        <svg width="16" height="17" viewBox="0 0 16 17" className="ml-[9px]">
          <rect x="0.5" y="1" width="14" height="14" fill="#28384e" stroke="#ddd" />
          <path d="M3 3L14 16" stroke="#fff" strokeWidth="2" />
        </svg>
        <svg width="16" height="17" viewBox="0 0 16 17" className="ml-[7px]">
          <rect x="0.5" y="0.5" width="15" height="16" rx="3" fill="#fff" />
          <circle cx="8" cy="9" r="4.5" fill="#161a25" />
          <circle cx="8" cy="9" r="2" fill="#fff" />
        </svg>
        <svg width="18" height="14" viewBox="0 0 18 14" className="ml-[8px]" fill="none" stroke="#cfd0d3" strokeWidth="1.3">
          <ellipse cx="9" cy="7" rx="8" ry="5" />
          <path d="M5 8C7 3 13 3 12 6C11 9 7 10 7 8" />
        </svg>
        <span className="ml-[13px]">95%</span>
        <svg width="24" height="13" viewBox="0 0 24 13" className="ml-[5px]">
          <rect x="0.5" y="0.5" width="20" height="12" rx="2.5" fill="none" stroke="#fff" />
          <rect x="2" y="2" width="17" height="9" rx="1" fill="#fff" />
          <rect x="22" y="4" width="1.5" height="5" fill="#fff" />
        </svg>
        <span className="ml-[15px] text-[13.7px]">Wed 5:50 PM</span>
        <Search size={16} className="ml-[22px]" strokeWidth={1.6} />
        <svg width="16" height="17" viewBox="0 0 16 17" className="ml-[18px]">
          <circle cx="8" cy="8.5" r="8" fill="#4b3fa8" />
          <path d="M8 1C12 4 12 12 8 16C4 12 4 4 8 1Z" fill="#e2559f" />
          <path d="M1 8.5C5 5 11 5 15 8.5C11 12 5 12 1 8.5Z" fill="#45c4e8" opacity="0.8" />
          <circle cx="8" cy="8.5" r="2" fill="#fff" />
        </svg>
        <svg width="18" height="13" viewBox="0 0 18 13" className="ml-[10px] mr-[24px]">
          <path d="M5 1.5H18M5 6.5H18M5 11.5H18M0 1.5H3M0 6.5H3M0 11.5H3" stroke="#fff" strokeWidth="1.8" />
        </svg>
      </div>
    </div>
  );
}

export default function App() {
  return (
    <div className="w-[1280px] h-[800px] relative overflow-hidden bg-[#0d1630] font-['Liberation_Sans',sans-serif]">
      <MenuBar />
      <div className="h-[727px] flex flex-col rounded-t-[5px] overflow-hidden bg-[#2c2d31] border-t border-[#050505]">
        <div className="h-[22px] flex items-center relative shrink-0">
          <div className="flex gap-[8px] pl-[8px]">
            <span className="w-[12px] h-[12px] rounded-full bg-[#55565a]" />
            <span className="w-[12px] h-[12px] rounded-full bg-[#55565a]" />
            <span className="w-[12px] h-[12px] rounded-full bg-[#55565a]" />
          </div>
          <div className="ml-[477px] flex items-center text-[13px] text-[#626367] font-['Inter',sans-serif]">
            <svg width="10" height="14" viewBox="0 0 10 14" className="mr-[7px]">
              <path d="M0 0H6.5L10 3.5V14H0Z" fill="#77787b" />
            </svg>
            <span>RedBlackTreeDeletion</span>
            <span className="text-[#47484c] ml-[4px]">— Edited</span>
          </div>
        </div>
        <Toolbar />
        <Ruler />
        <div className="h-[632px] shrink-0 bg-[#9f805f] relative pl-[5px] pt-[1px] text-[17px] leading-[20px] text-white whitespace-pre">
          {LINES.map(([t, c], i) => (
            <div key={i} className={c}>
              {t}
            </div>
          ))}
          <Drawing />
        </div>
        <div className="flex-1 bg-[#27282b] border-b border-[#0a0a0a]" />
      </div>
      <Dock />
      <Ipevo />
    </div>
  );
}
